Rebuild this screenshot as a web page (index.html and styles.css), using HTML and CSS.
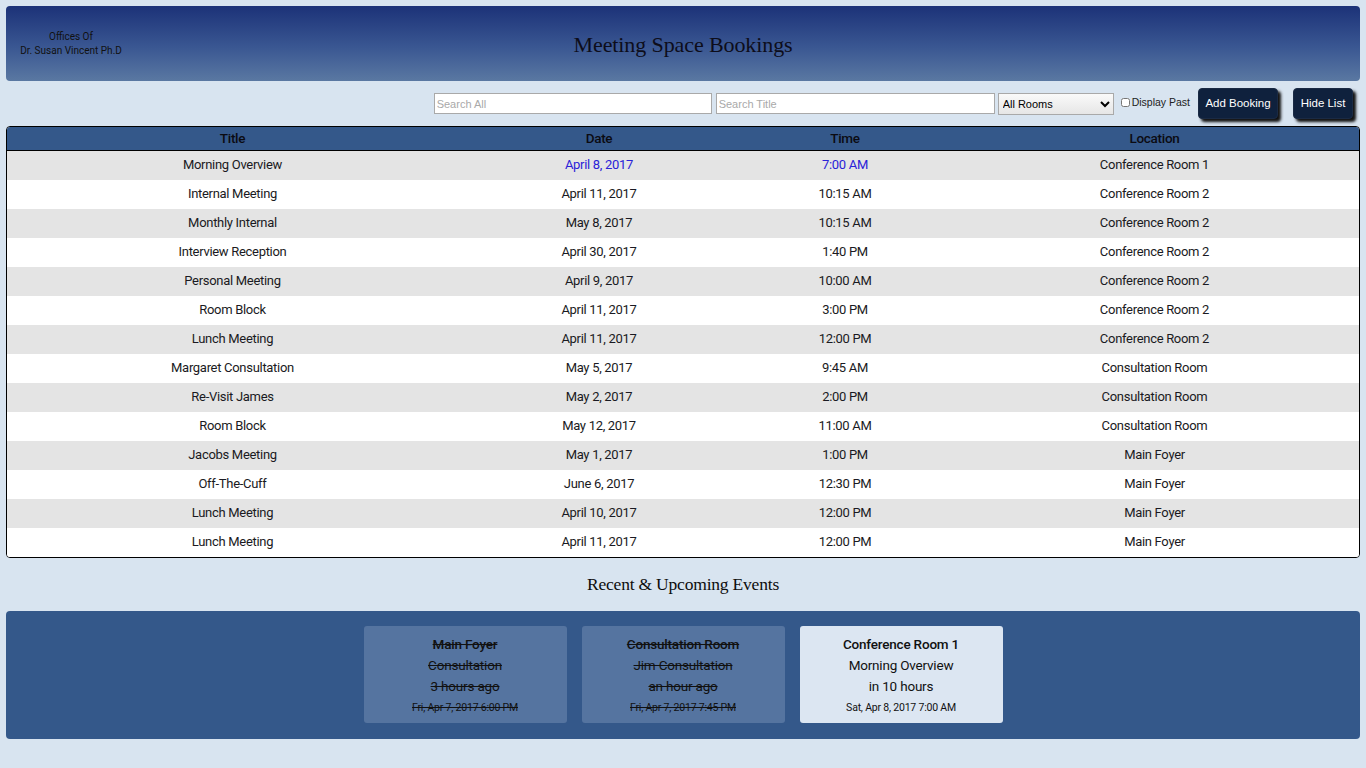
FILE: index.html
```html
<!DOCTYPE html>
<html>
<head>
<meta charset="utf-8">
<link rel="stylesheet" href="styles.css">
</head>
<body>
<header class="banner">
  <div class="offices">Offices Of<br>Dr. Susan Vincent Ph.D</div>
  <h1 class="title">Meeting Space Bookings</h1>
</header>
<div class="toolbar">
  <input class="search search-all" type="text" placeholder="Search All">
  <input class="search search-title" type="text" placeholder="Search Title">
  <select class="rooms"><option>All Rooms</option></select>
  <label class="past"><input type="checkbox"> Display Past</label>
  <button class="btn add">Add Booking</button>
  <button class="btn hide">Hide List</button>
</div>
<div class="table-wrap">
<table class="bookings">
  <thead>
    <tr><th class="c1">Title</th><th class="c2">Date</th><th class="c3">Time</th><th class="c4">Location</th></tr>
  </thead>
  <tbody>
    <tr class="next"><td>Morning Overview</td><td class="hl">April 8, 2017</td><td class="hl">7:00 AM</td><td>Conference Room 1</td></tr>
    <tr><td>Internal Meeting</td><td>April 11, 2017</td><td>10:15 AM</td><td>Conference Room 2</td></tr>
    <tr><td>Monthly Internal</td><td>May 8, 2017</td><td>10:15 AM</td><td>Conference Room 2</td></tr>
    <tr><td>Interview Reception</td><td>April 30, 2017</td><td>1:40 PM</td><td>Conference Room 2</td></tr>
    <tr><td>Personal Meeting</td><td>April 9, 2017</td><td>10:00 AM</td><td>Conference Room 2</td></tr>
    <tr><td>Room Block</td><td>April 11, 2017</td><td>3:00 PM</td><td>Conference Room 2</td></tr>
    <tr><td>Lunch Meeting</td><td>April 11, 2017</td><td>12:00 PM</td><td>Conference Room 2</td></tr>
    <tr><td>Margaret Consultation</td><td>May 5, 2017</td><td>9:45 AM</td><td>Consultation Room</td></tr>
    <tr><td>Re-Visit James</td><td>May 2, 2017</td><td>2:00 PM</td><td>Consultation Room</td></tr>
    <tr><td>Room Block</td><td>May 12, 2017</td><td>11:00 AM</td><td>Consultation Room</td></tr>
    <tr><td>Jacobs Meeting</td><td>May 1, 2017</td><td>1:00 PM</td><td>Main Foyer</td></tr>
    <tr><td>Off-The-Cuff</td><td>June 6, 2017</td><td>12:30 PM</td><td>Main Foyer</td></tr>
    <tr><td>Lunch Meeting</td><td>April 10, 2017</td><td>12:00 PM</td><td>Main Foyer</td></tr>
    <tr><td>Lunch Meeting</td><td>April 11, 2017</td><td>12:00 PM</td><td>Main Foyer</td></tr>
  </tbody>
</table>
</div>
<h2 class="events-title">Recent &amp; Upcoming Events</h2>
<section class="events">
  <div class="card past-card">
    <div class="room">Main Foyer</div>
    <div class="line">Consultation</div>
    <div class="line">3 hours ago</div>
    <div class="when">Fri, Apr 7, 2017 6:00 PM</div>
  </div>
  <div class="card past-card">
    <div class="room">Consultation Room</div>
    <div class="line">Jim Consultation</div>
    <div class="line">an hour ago</div>
    <div class="when">Fri, Apr 7, 2017 7:45 PM</div>
  </div>
  <div class="card upcoming">
    <div class="room">Conference Room 1</div>
    <div class="line">Morning Overview</div>
    <div class="line">in 10 hours</div>
    <div class="when">Sat, Apr 8, 2017 7:00 AM</div>
  </div>
</section>
</body>
</html>
```
FILE: styles.css
```css
html, body {
  margin: 0;
  padding: 0;
}
body {
  background: #d8e4f0;
  font-family: Roboto, "Liberation Sans", sans-serif;
  color: #111;
  padding: 6px 6px 20px;
  min-height: 768px;
  box-sizing: border-box;
}
.banner {
  height: 75px;
  border-radius: 4px;
  background: linear-gradient(to bottom, #1c3278 0%, #3a5792 55%, #5a78a2 100%);
  display: flex;
  align-items: center;
  position: relative;
}
.offices {
  position: absolute;
  left: 14px;
  top: 24px;
  width: 102px;
  text-align: center;
  font-size: 10px;
  line-height: 14px;
  color: #111;
}
.title {
  flex: 1;
  margin: 0;
  text-align: center;
  font-family: "Liberation Serif", serif;
  font-weight: normal;
  font-size: 22px;
  letter-spacing: -0.1px;
  color: #0d0d1a;
  padding-top: 3px;
}
.toolbar {
  display: flex;
  justify-content: flex-end;
  align-items: center;
  height: 33px;
  margin-top: 6px;
  padding-right: 7px;
  font-family: "Liberation Sans", Arial, sans-serif;
}
.search {
  height: 21px;
  box-sizing: border-box;
  border: 1px solid #a9a9a9;
  background: #fff;
  font-family: "Liberation Sans", Arial, sans-serif;
  font-size: 11px;
  padding: 0 2px;
  margin: 0 4px 0 0;
}
.search::placeholder { color: #a9a9a9; }
.search-all { width: 278px; }
.search-title { width: 279px; margin-right: 3px; }
.rooms {
  width: 116px;
  height: 22px;
  font-size: 11px;
  font-family: "Liberation Sans", Arial, sans-serif;
  border: 1px solid #a9a9a9;
  border-radius: 0;
  background: linear-gradient(#fafafa, #e6e6e6);
  margin-right: 7px;
}
.past {
  display: flex;
  align-items: center;
  font-size: 10.5px;
  color: #222;
  margin-right: 8px;
  margin-top: -3px;
}
.past input {
  width: 9px;
  height: 9px;
  margin: 0 2px 0 0;
}
.btn {
  height: 31px;
  background: #0f213d;
  color: #fff;
  border: 1px solid #1a2a44;
  border-radius: 4px;
  font-family: "Liberation Sans", Arial, sans-serif;
  font-size: 11.5px;
  white-space: nowrap;
  box-shadow: 3px 3px 3px #111;
  padding: 0;
  margin-top: -1px;
}
.add { width: 80px; margin-right: 15px; }
.hide { width: 60px; }
.table-wrap {
  margin-top: 6px;
  border: 1px solid #000;
  border-radius: 4px;
  overflow: hidden;
  background: #fff;
}
.bookings {
  width: 100%;
  border-collapse: collapse;
  font-size: 13px;
  letter-spacing: -0.3px;
}
.bookings th {
  background: #34588a;
  height: 21px;
  padding: 0 0 2px;
  font-weight: 500;
  font-size: 13.5px;
  color: #0b0b12;
  border-bottom: 1px solid #000;
}
.c1 { width: 451px; }
.c2 { width: 282px; }
.c3 { width: 210px; }
.bookings td {
  height: 27px;
  padding: 0 0 2px;
  text-align: center;
  color: #1a1a22;
}
.bookings tbody tr:nth-child(odd) { background: #e4e4e4; }
.bookings tbody tr:nth-child(even) { background: #fff; }
.bookings td.hl { color: #2a22d8; }
.events-title {
  margin: 16px 0 0;
  height: 37px;
  text-align: center;
  font-family: "Liberation Serif", serif;
  font-weight: normal;
  font-size: 17.5px;
  letter-spacing: -0.2px;
  color: #0d0d0d;
}
.events {
  background: #34588a;
  border-radius: 4px;
  height: 128px;
  padding-top: 15px;
  box-sizing: border-box;
  display: flex;
  justify-content: center;
  gap: 15px;
}
.card {
  width: 203px;
  height: 97px;
  border-radius: 3px;
  box-sizing: border-box;
  padding-top: 8px;
  text-align: center;
  font-size: 13.5px;
  letter-spacing: -0.2px;
  line-height: 21px;
  color: #111;
}
.past-card {
  background: #5574a0;
  text-decoration: line-through;
}
.upcoming { background: #dce6f2; }
.room { font-weight: 500; }
.when { font-size: 10.5px; }
```
